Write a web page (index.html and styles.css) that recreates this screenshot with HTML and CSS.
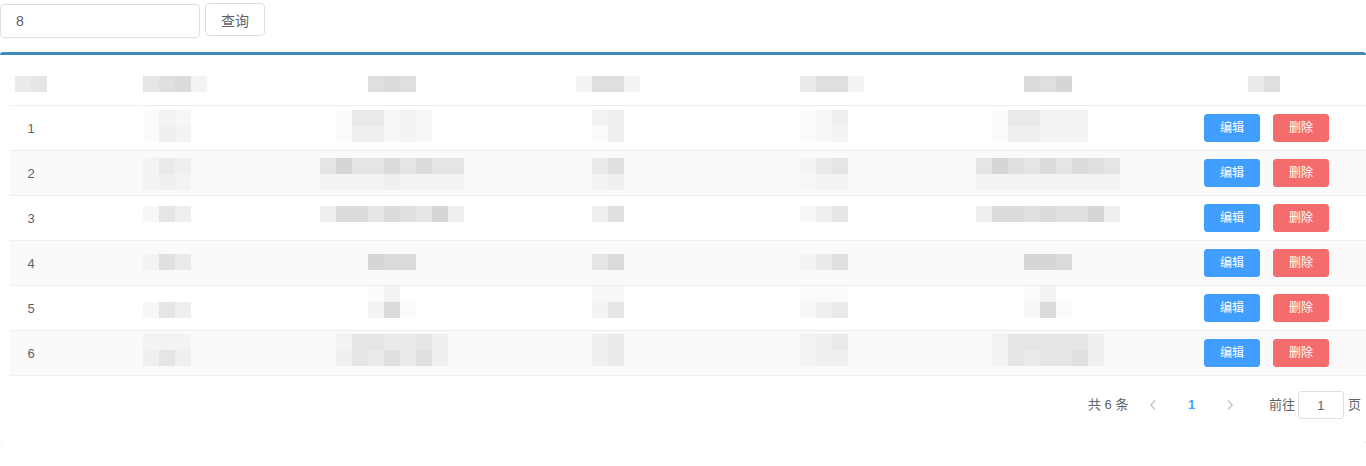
FILE: index.html
```html
<!DOCTYPE html>
<html lang="zh-CN">
<head>
<meta charset="utf-8">
<title>列表</title>
<link rel="stylesheet" href="styles.css">
</head>
<body>
<div class="toolbar">
  <input class="search" type="text" value="8">
  <button class="btn-plain">查询</button>
</div>

<div class="box">
  <table class="grid">
    <colgroup>
      <col class="w1"><col class="w2"><col class="w3"><col class="w4"><col class="w5"><col class="w6"><col class="w7">
    </colgroup>
    <thead>
      <tr>
        <th><div class="mz"><div class="mr"><i class="k5"></i><i class="k6"></i></div></div></th>
        <th><div class="mz"><div class="mr"><i class="k6"></i><i class="k7"></i><i class="k8"></i><i class="k3"></i></div></div></th>
        <th><div class="mz"><div class="mr"><i class="k7"></i><i class="k8"></i><i class="k7"></i></div></div></th>
        <th><div class="mz"><div class="mr"><i class="k3"></i><i class="k7"></i><i class="k7"></i><i class="k3"></i></div></div></th>
        <th><div class="mz"><div class="mr"><i class="k5"></i><i class="k7"></i><i class="k7"></i><i class="k3"></i></div></div></th>
        <th><div class="mz"><div class="mr"><i class="k8"></i><i class="k7"></i><i class="k9"></i></div></div></th>
        <th><div class="mz"><div class="mr"><i class="k5"></i><i class="k7"></i></div></div></th>
      </tr>
    </thead>
    <tbody>
      <tr class="row r1">
        <td class="idx">1</td>
        <td><div class="mz">
          <div class="mr"><i class="k1"></i><i class="k3"></i><i class="k2"></i><i></i></div>
          <div class="mr"><i class="k1"></i><i class="k4"></i><i class="k3"></i><i></i></div>
        </div></td>
        <td><div class="mz">
          <div class="mr"><i></i><i class="k1"></i><i class="k5"></i><i class="k5"></i><i class="k2"></i><i class="k3"></i><i class="k2"></i><i></i><i></i></div>
          <div class="mr"><i></i><i class="k1"></i><i class="k4"></i><i class="k4"></i><i class="k2"></i><i class="k3"></i><i class="k2"></i><i></i><i></i></div>
        </div></td>
        <td><div class="mz">
          <div class="mr"><i></i><i class="k3"></i><i class="k4"></i><i></i></div>
          <div class="mr"><i></i><i class="k1"></i><i class="k4"></i><i></i></div>
        </div></td>
        <td><div class="mz">
          <div class="mr"><i class="k1"></i><i class="k2"></i><i class="k4"></i><i></i></div>
          <div class="mr"><i class="k1"></i><i class="k2"></i><i class="k3"></i><i></i></div>
        </div></td>
        <td><div class="mz">
          <div class="mr"><i></i><i class="k1"></i><i class="k5"></i><i class="k5"></i><i class="k3"></i><i class="k3"></i><i class="k3"></i><i></i><i></i></div>
          <div class="mr"><i></i><i class="k1"></i><i class="k4"></i><i class="k4"></i><i class="k3"></i><i class="k3"></i><i class="k3"></i><i></i><i></i></div>
        </div></td>
        <td class="ops"><div class="op-wrap"><button class="btn-mini primary">编辑</button><button class="btn-mini danger">删除</button></div></td>
      </tr>

      <tr class="row r2 stripe">
        <td class="idx">2</td>
        <td><div class="mz">
          <div class="mr"><i class="k3"></i><i class="k5"></i><i class="k4"></i><i></i></div>
          <div class="mr"><i class="k3"></i><i class="k4"></i><i class="k3"></i><i></i></div>
        </div></td>
        <td><div class="mz">
          <div class="mr"><i class="k6"></i><i class="k9"></i><i class="k6"></i><i class="k6"></i><i class="k8"></i><i class="k6"></i><i class="k8"></i><i class="k6"></i><i class="k6"></i></div>
          <div class="mr"><i class="k3"></i><i class="k3"></i><i class="k3"></i><i class="k3"></i><i class="k4"></i><i class="k3"></i><i class="k3"></i><i class="k3"></i><i class="k3"></i></div>
        </div></td>
        <td><div class="mz">
          <div class="mr"><i></i><i class="k5"></i><i class="k7"></i><i></i></div>
          <div class="mr"><i></i><i class="k3"></i><i class="k4"></i><i></i></div>
        </div></td>
        <td><div class="mz">
          <div class="mr"><i class="k3"></i><i class="k5"></i><i class="k6"></i><i></i></div>
          <div class="mr"><i class="k2"></i><i class="k3"></i><i class="k3"></i><i></i></div>
        </div></td>
        <td><div class="mz">
          <div class="mr"><i class="k6"></i><i class="k9"></i><i class="k7"></i><i class="k6"></i><i class="k8"></i><i class="k6"></i><i class="k8"></i><i class="k7"></i><i class="k6"></i></div>
          <div class="mr"><i class="k3"></i><i class="k3"></i><i class="k3"></i><i class="k3"></i><i class="k3"></i><i class="k3"></i><i class="k3"></i><i class="k3"></i><i class="k3"></i></div>
        </div></td>
        <td class="ops"><div class="op-wrap"><button class="btn-mini primary">编辑</button><button class="btn-mini danger">删除</button></div></td>
      </tr>

      <tr class="row r3">
        <td class="idx">3</td>
        <td><div class="mz">
          <div class="mr"><i class="k2"></i><i class="k6"></i><i class="k4"></i><i></i></div>
        </div></td>
        <td><div class="mz">
          <div class="mr"><i class="k4"></i><i class="k8"></i><i class="k8"></i><i class="k6"></i><i class="k8"></i><i class="k7"></i><i class="k6"></i><i class="k9"></i><i class="k4"></i></div>
        </div></td>
        <td><div class="mz">
          <div class="mr"><i></i><i class="k4"></i><i class="k7"></i><i></i></div>
        </div></td>
        <td><div class="mz">
          <div class="mr"><i class="k2"></i><i class="k4"></i><i class="k6"></i><i></i></div>
        </div></td>
        <td><div class="mz">
          <div class="mr"><i class="k4"></i><i class="k8"></i><i class="k8"></i><i class="k7"></i><i class="k8"></i><i class="k7"></i><i class="k7"></i><i class="k9"></i><i class="k4"></i></div>
        </div></td>
        <td class="ops"><div class="op-wrap"><button class="btn-mini primary">编辑</button><button class="btn-mini danger">删除</button></div></td>
      </tr>

      <tr class="row r4 stripe">
        <td class="idx">4</td>
        <td><div class="mz">
          <div class="mr"><i class="k3"></i><i class="k7"></i><i class="k5"></i><i></i></div>
        </div></td>
        <td><div class="mz">
          <div class="mr"><i></i><i></i><i></i><i class="k9"></i><i class="k8"></i><i class="k8"></i><i></i><i></i><i></i></div>
        </div></td>
        <td><div class="mz">
          <div class="mr"><i></i><i class="k6"></i><i class="k8"></i><i></i></div>
        </div></td>
        <td><div class="mz">
          <div class="mr"><i class="k3"></i><i class="k5"></i><i class="k7"></i><i></i></div>
        </div></td>
        <td><div class="mz">
          <div class="mr"><i></i><i></i><i></i><i class="k9"></i><i class="k9"></i><i class="k8"></i><i></i><i></i><i></i></div>
        </div></td>
        <td class="ops"><div class="op-wrap"><button class="btn-mini primary">编辑</button><button class="btn-mini danger">删除</button></div></td>
      </tr>

      <tr class="row r5">
        <td class="idx">5</td>
        <td><div class="mz">
          <div class="mr"><i></i><i></i><i></i><i></i></div>
          <div class="mr"><i class="k2"></i><i class="k6"></i><i class="k4"></i><i></i></div>
        </div></td>
        <td><div class="mz">
          <div class="mr"><i></i><i></i><i></i><i class="k1"></i><i class="k3"></i><i></i><i></i><i></i><i></i></div>
          <div class="mr"><i></i><i></i><i></i><i class="k3"></i><i class="k8"></i><i class="k1"></i><i></i><i></i><i></i></div>
        </div></td>
        <td><div class="mz">
          <div class="mr"><i></i><i class="k2"></i><i class="k2"></i><i></i></div>
          <div class="mr"><i></i><i class="k3"></i><i class="k6"></i><i></i></div>
        </div></td>
        <td><div class="mz">
          <div class="mr"><i class="k1"></i><i class="k1"></i><i class="k1"></i><i></i></div>
          <div class="mr"><i class="k2"></i><i class="k4"></i><i class="k5"></i><i></i></div>
        </div></td>
        <td><div class="mz">
          <div class="mr"><i></i><i></i><i></i><i class="k1"></i><i class="k3"></i><i></i><i></i><i></i><i></i></div>
          <div class="mr"><i></i><i></i><i></i><i class="k2"></i><i class="k8"></i><i class="k1"></i><i></i><i></i><i></i></div>
        </div></td>
        <td class="ops"><div class="op-wrap"><button class="btn-mini primary">编辑</button><button class="btn-mini danger">删除</button></div></td>
      </tr>

      <tr class="row r6 stripe">
        <td class="idx">6</td>
        <td><div class="mz">
          <div class="mr"><i class="k3"></i><i class="k3"></i><i class="k3"></i><i></i></div>
          <div class="mr"><i class="k4"></i><i class="k6"></i><i class="k4"></i><i></i></div>
        </div></td>
        <td><div class="mz">
          <div class="mr"><i></i><i class="k3"></i><i class="k6"></i><i class="k6"></i><i class="k5"></i><i class="k5"></i><i class="k6"></i><i class="k4"></i><i></i></div>
          <div class="mr"><i></i><i class="k4"></i><i class="k6"></i><i class="k5"></i><i class="k7"></i><i class="k5"></i><i class="k7"></i><i class="k4"></i><i></i></div>
        </div></td>
        <td><div class="mz">
          <div class="mr"><i></i><i class="k4"></i><i class="k5"></i><i></i></div>
          <div class="mr"><i></i><i class="k4"></i><i class="k5"></i><i></i></div>
        </div></td>
        <td><div class="mz">
          <div class="mr"><i class="k3"></i><i class="k4"></i><i class="k5"></i><i></i></div>
          <div class="mr"><i class="k3"></i><i class="k4"></i><i class="k4"></i><i></i></div>
        </div></td>
        <td><div class="mz">
          <div class="mr"><i></i><i class="k3"></i><i class="k6"></i><i class="k6"></i><i class="k6"></i><i class="k6"></i><i class="k6"></i><i class="k4"></i><i></i></div>
          <div class="mr"><i></i><i class="k3"></i><i class="k6"></i><i class="k5"></i><i class="k6"></i><i class="k6"></i><i class="k7"></i><i class="k4"></i><i></i></div>
        </div></td>
        <td class="ops"><div class="op-wrap"><button class="btn-mini primary">编辑</button><button class="btn-mini danger">删除</button></div></td>
      </tr>
    </tbody>
  </table>

  <div class="pager">
    <span class="total">共 6 条</span>
    <button class="pg-btn prev" disabled>
      <svg width="8" height="12" viewBox="0 0 8 12"><path d="M6 1.5 L1.8 6 L6 10.5" fill="none" stroke="#c0c4cc" stroke-width="1.3"/></svg>
    </button>
    <span class="pg-num active">1</span>
    <button class="pg-btn next" disabled>
      <svg width="8" height="12" viewBox="0 0 8 12"><path d="M2 1.5 L6.2 6 L2 10.5" fill="none" stroke="#c0c4cc" stroke-width="1.3"/></svg>
    </button>
    <span class="jumper">前往<input class="pg-input" type="text" value="1">页</span>
  </div>
</div>
</body>
</html>
```

FILE: styles.css
```css
* { box-sizing: border-box; }

body {
  margin: 0;
  background: #fff;
  font-family: "Liberation Sans", "Noto Sans CJK SC", sans-serif;
  color: #606266;
}

.toolbar {
  display: flex;
  align-items: flex-start;
  gap: 5px;
  padding-top: 4px;
  height: 38px;
}

.search {
  width: 200px;
  height: 34px;
  border: 1px solid #dcdfe6;
  border-radius: 4px;
  padding: 0 15px;
  font-family: inherit;
  font-size: 14px;
  color: #606266;
  outline: none;
}

.btn-plain {
  width: 60px;
  height: 33px;
  margin-top: -1px;
  border: 1px solid #dcdfe6;
  border-radius: 4px;
  background: #fff;
  font-family: inherit;
  font-size: 14px;
  color: #606266;
  padding: 0;
}

.box {
  margin-top: 14px;
  background: #fff;
  border-top: 3px solid #3c8dbc;
  border-radius: 3px;
  box-shadow: 0 1px 0 #e4e4e4;
  padding: 7px 0 24px 10px;
}

.grid {
  width: 1356px;
  table-layout: fixed;
  border-collapse: separate;
  border-spacing: 0;
  font-size: 13px;
  color: #606266;
}

.w1 { width: 42px; }
.w2 { width: 246px; }
.w3 { width: 188px; }
.w4 { width: 243px; }
.w5 { width: 206px; }
.w6 { width: 226px; }
.w7 { width: 205px; }

.grid th {
  height: 44px;
  padding: 0;
  border-bottom: 1px solid #ebeef5;
  vertical-align: middle;
  font-weight: normal;
}

.grid td {
  height: 45px;
  padding: 0;
  border-bottom: 1px solid #ebeef5;
  vertical-align: top;
}

.row.stripe td { background: #fafafa; }

.grid td.idx,
.grid td.ops {
  vertical-align: middle;
  text-align: center;
}

/* pixelated (redacted) content */
.mz {
  display: flex;
  flex-direction: column;
  align-items: center;
}
.mr { display: flex; }
.mr i {
  display: block;
  width: 16px;
  height: 16px;
}
.k1 { background: #fbfbfb; }
.k2 { background: #f7f7f7; }
.k3 { background: #f3f3f3; }
.k4 { background: #efefef; }
.k5 { background: #eaeaea; }
.k6 { background: #e5e5e5; }
.k7 { background: #e0e0e1; }
.k8 { background: #dbdbdc; }
.k9 { background: #d6d6d7; }

.r1 .mz { margin-top: 4px; }
.r2 .mz { margin-top: 7px; }
.r3 .mz { margin-top: 10px; }
.r4 .mz { margin-top: 13px; }
.r5 .mz { margin-top: 0; }
.r6 .mz { margin-top: 3px; }

.op-wrap {
  display: flex;
  justify-content: center;
  gap: 13px;
  padding-left: 6px;
}

.btn-mini {
  width: 56px;
  height: 28px;
  padding: 0;
  border-radius: 3px;
  font-family: inherit;
  font-size: 12px;
  color: #fff;
  line-height: 26px;
}
.btn-mini.primary { background: #409eff; border: 1px solid #409eff; }
.btn-mini.danger { background: #f56c6c; border: 1px solid #f56c6c; }

.pager {
  display: flex;
  justify-content: flex-end;
  align-items: center;
  margin-top: 15px;
  height: 28px;
  padding-right: 5px;
  font-size: 13px;
  color: #606266;
}

.total { margin-right: 10px; line-height: 28px; }

.pg-btn {
  width: 35.5px;
  height: 28px;
  border: 0;
  background: transparent;
  display: flex;
  align-items: center;
  padding: 0;
}
.pg-btn.prev { padding-left: 11px; justify-content: flex-start; }
.pg-btn.next { padding-right: 11px; justify-content: flex-end; }

.pg-num {
  width: 35.5px;
  text-align: center;
  line-height: 28px;
  font-weight: bold;
}
.pg-num.active { color: #409eff; }

.jumper {
  margin-left: 24px;
  display: flex;
  align-items: center;
  line-height: 28px;
}

.pg-input {
  width: 46px;
  height: 28px;
  margin: 0 4px 0 3px;
  border: 1px solid #dcdfe6;
  border-radius: 3px;
  text-align: center;
  font-family: inherit;
  font-size: 13px;
  color: #606266;
  outline: none;
  padding: 0;
}
```
